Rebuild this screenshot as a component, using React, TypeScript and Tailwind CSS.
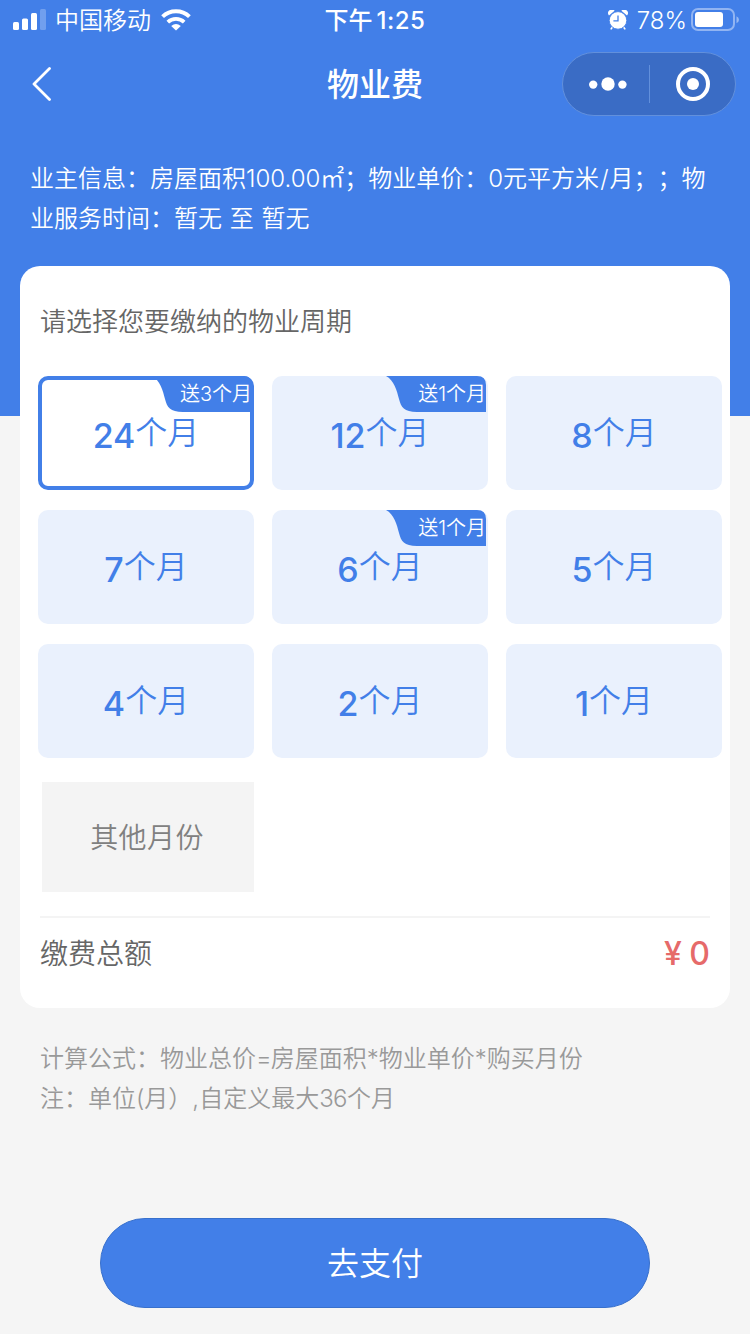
import clsx from "clsx";

const periods = [
  { months: 24, gift: 3 },
  { months: 12, gift: 1 },
  { months: 8 },
  { months: 7 },
  { months: 6, gift: 1 },
  { months: 5 },
  { months: 4 },
  { months: 2 },
  { months: 1 },
];

function SignalIcon() {
  return (
    <svg width="34" height="22" viewBox="0 0 34 22" fill="#fff">
      <rect x="0" y="13" width="6" height="8" rx="1.5" />
      <rect x="9" y="9.5" width="6" height="11.5" rx="1.5" />
      <rect x="18" y="4" width="6" height="17" rx="1.5" />
      <rect x="27" y="0" width="6" height="21" rx="1.5" opacity="0.25" />
    </svg>
  );
}

function WifiIcon() {
  return (
    <svg width="30" height="22" viewBox="0 0 30 22" fill="none" stroke="#fff">
      <path d="M1.6 7.6A19.4 19.4 0 0 1 28.4 7.6" strokeWidth="4" />
      <path d="M6.8 13.2A12 12 0 0 1 23.2 13.2" strokeWidth="3.8" />
      <path d="M10.2 16.9Q15 13 19.8 16.9L15 21.6Z" fill="#fff" stroke="none" />
    </svg>
  );
}

function AlarmIcon() {
  return (
    <svg width="20" height="20" viewBox="0 0 20 20">
      <path d="M1 5.4A3.2 3.2 0 0 1 6.6 0.8ZM19 5.4A3.2 3.2 0 0 0 13.4 0.8Z" fill="#fff" />
      <path d="M5 16.6L3.2 18.8M15 16.6L16.8 18.8" stroke="#fff" strokeWidth="1.6" strokeLinecap="round" />
      <circle cx="10" cy="10.4" r="8.8" fill="#fff" stroke="#427fe8" strokeWidth="0.9" />
      <path d="M10 5.4V10.9H5.4" fill="none" stroke="#427fe8" strokeWidth="1.3" />
    </svg>
  );
}

function BatteryIcon() {
  return (
    <svg width="48" height="24" viewBox="0 0 48 24">
      <rect x="1" y="1" width="42" height="21" rx="6" fill="none" stroke="#fff" strokeOpacity="0.42" strokeWidth="2" />
      <rect x="4" y="4" width="28" height="15" rx="3" fill="#fff" />
      <path d="M45.5 8.2Q48 9.5 48 11.7T45.5 15.2Z" fill="#fff" opacity="0.45" />
    </svg>
  );
}

function StatusBar() {
  return (
    <div className="grid h-10 grid-cols-[1fr_auto_1fr] items-center pl-[13px] pr-[13px] text-2xl">
      <div className="flex items-center">
        <SignalIcon />
        <span className="ml-2 pt-0.5 font-[350]">中国移动</span>
        <span className="ml-[10px]">
          <WifiIcon />
        </span>
      </div>
      <div className="pt-0.5 font-medium">
        下午<span className="ml-1 tracking-[0.5px]">1:25</span>
      </div>
      <div className="-mr-0.5 flex items-center justify-end">
        <AlarmIcon />
        <span className="ml-[9px] mr-1 pt-0.5 font-[350]">78%</span>
        <BatteryIcon />
      </div>
    </div>
  );
}

function NavBar() {
  return (
    <div className="grid h-[88px] grid-cols-[1fr_auto_1fr] items-center px-[14px]">
      <svg className="ml-[18px]" width="20" height="34" viewBox="0 0 20 34" fill="none" stroke="#fff" strokeWidth="2.8" strokeLinecap="round" strokeLinejoin="round">
        <path d="M17.5 1.5L2 17L17.5 32.5" />
      </svg>
      <h1 className="pt-0.5 text-[32px] font-medium">物业费</h1>
      <div className="flex h-16 w-[174px] items-center justify-self-end rounded-full border border-[#6290dc] bg-[#3a6cc5]">
        <div className="flex w-[86px] justify-center pl-1">
          <svg width="38" height="16" viewBox="0 0 38 16" fill="#fff">
            <circle cx="4.2" cy="8.6" r="4.2" />
            <circle cx="19" cy="8" r="6.7" />
            <circle cx="33.4" cy="8.6" r="4.2" />
          </svg>
        </div>
        <div className="h-[38px] w-px bg-[#6290dc]" />
        <svg className="mx-auto" width="34" height="34" viewBox="0 0 34 34">
          <circle cx="17" cy="17" r="15" fill="none" stroke="#fff" strokeWidth="4" />
          <circle cx="17" cy="17" r="6" fill="#fff" />
        </svg>
      </div>
    </div>
  );
}

function GiftTag({ count, active }: { count: number; active: boolean }) {
  return (
    <div className={clsx("absolute h-9 w-[100px]", active ? "-right-0.5 -top-1" : "right-[2px] top-0")}>
      <svg className="absolute inset-0" width="100" height="36" viewBox="0 0 100 36">
        <path d="M0 0H91Q100 0 100 9V36H31C18 36 15 31 13 23C11 15 8 4 0 0Z" fill="#427fe8" />
      </svg>
      <span className="absolute right-0 top-0 whitespace-nowrap text-xl leading-9 font-[350] text-white">
        送{count}个月
      </span>
    </div>
  );
}

function PeriodItem({ months, gift, active }: { months: number; gift?: number; active: boolean }) {
  return (
    <div
      className={clsx(
        "relative flex h-[114px] items-center justify-center rounded-[10px] text-[#427fe8]",
        active ? "border-4 border-[#427fe8] bg-white" : "bg-[#eaf1fd]"
      )}
    >
      {gift && <GiftTag count={gift} active={active} />}
      <span className="mt-1.5 text-[34px] font-medium">{months}</span>
      <span className="text-[32px] font-[350]">个月</span>
    </div>
  );
}

export default function App() {
  return (
    <div className="h-[1334px] w-[750px] overflow-hidden bg-[linear-gradient(#427fe8_416px,#f5f5f5_416px)] font-['Inter','Noto_Sans_CJK_SC',sans-serif] leading-none text-white [text-spacing-trim:space-all]">
      <StatusBar />
      <NavBar />

      <div className="mt-[31px] pl-[30px] text-2xl leading-10 font-[350]">
        <p>
          业主信息：房屋面积100.00㎡；物业单价：0元平方米<span className="mx-px">/</span>月；；物
        </p>
        <p className="[word-spacing:1px]">业服务时间：暂无 至 暂无</p>
      </div>

      <div className="mx-5 mt-[27px] h-[742px] rounded-[20px] bg-white text-[#666]">
        <h2 className="pl-5 pt-[37px] text-[26px] leading-[38px] font-[350]">请选择您要缴纳的物业周期</h2>

        <div className="ml-[18px] mt-[35px] grid w-[684px] grid-cols-3 gap-x-[18px] gap-y-5">
          {periods.map((item) => (
            <PeriodItem key={item.months} {...item} active={item.months === 24} />
          ))}
        </div>

        <div className="ml-[22px] mt-6 flex h-[110px] w-[212px] items-center justify-center bg-[#f4f4f4] pr-0.5 pt-0.5 text-[28px] tracking-[0.4px] font-[350] text-[#808080]">
          其他月份
        </div>

        <div className="mx-5 mt-6 flex h-[74px] items-center justify-between border-t-2 border-[#f4f4f4]">
          <span className="text-[28px] font-[350]">缴费总额</span>
          <span className="text-[32px] font-medium text-[#e66a6a] [word-spacing:-1px]">¥ 0</span>
        </div>
      </div>

      <div className="mt-[31px] pl-10 text-2xl leading-10 font-[350] text-[#999]">
        <p>
          计算公式：物业总价<span className="-mr-px">=</span>房屋面积*物业单价*购买月份
        </p>
        <p>
          注：单位(月）,自定义最大<span className="tracking-[-0.6px]">36</span>个月
        </p>
      </div>

      <button className="mx-auto mt-[99px] flex h-[90px] w-[550px] items-center justify-center rounded-full border border-[#3870cc] bg-[#427fe8] pt-0.5 text-[32px] font-[350]">
        去支付
      </button>
    </div>
  );
}
